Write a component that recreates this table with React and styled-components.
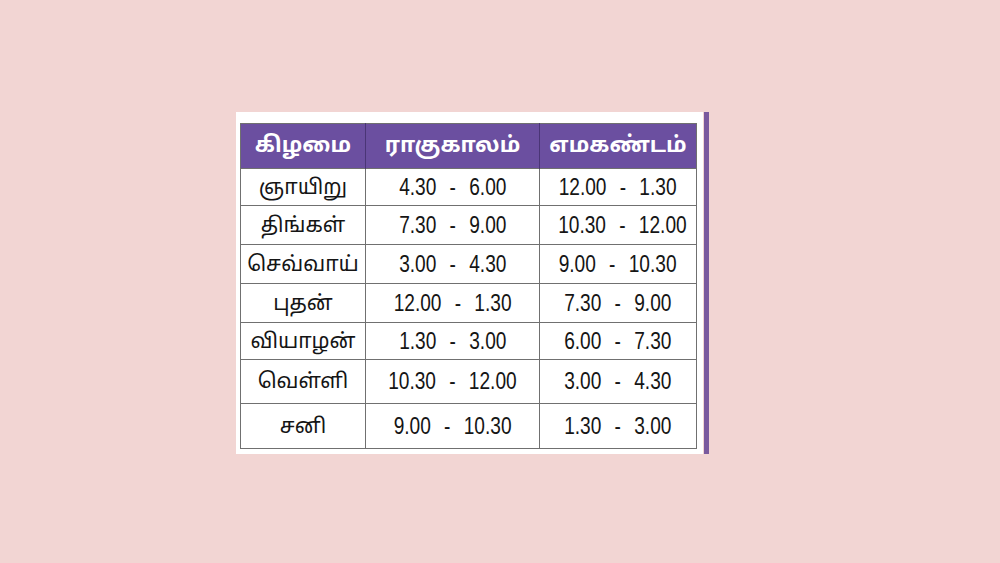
import styled, { createGlobalStyle } from "styled-components";

const GlobalStyle = createGlobalStyle`
  html, body {
    margin: 0;
    padding: 0;
    background: #f2d5d3;
  }
  body {
    font-family: "Liberation Sans", "Noto Sans", sans-serif;
  }
`;

const SPage = styled.div`
  width: 1000px;
  height: 563px;
  display: flex;
  padding: 112px 0 0 236px;
  box-sizing: border-box;
`;

const SCard = styled.div`
  display: flex;
  height: 342px;
`;

const SSheet = styled.div`
  width: 467px;
  background: #fff;
  padding: 11px 7px 6px 4px;
  box-sizing: border-box;
`;

const SBar = styled.div`
  width: 5px;
  margin-left: 1px;
  background: #7a5a9e;
`;

const STable = styled.table`
  width: 456px;
  border-collapse: collapse;
  table-layout: fixed;
  border: 1.5px solid #707070;
`;

const tamil = `"Noto Sans Tamil", "Lohit Tamil", "Noto Sans", sans-serif`;

const SHeadCell = styled.th`
  background: #6b4fa0;
  color: #fff;
  font-family: ${tamil};
  font-size: 22px;
  font-weight: 700;
  height: 44px;
  padding: 0;
  border-left: 1.5px solid #4a3576;
  text-align: center;
  &:first-child {
    border-left: none;
  }
`;

const SCell = styled.td`
  height: ${(p) => p.$h}px;
  padding: ${(p) => (p.$tamil ? "3px 0 0" : "1px 0 0")};
  text-align: center;
  border: 1.5px solid #707070;
  color: #151515;
  font-family: ${tamil};
  font-size: 21px;
  white-space: nowrap;
  box-sizing: border-box;
`;

const STime = styled.span`
  display: inline-block;
  font-family: "Liberation Sans", Arial, sans-serif;
  font-size: 24.5px;
  transform: scaleX(0.78);
  white-space: pre;
`;

const SDash = styled.span`
  margin: 0 17px;
`;

const Time = ({ value }) => {
  const [a, b] = value.split("-");
  return (
    <STime>
      {a}
      <SDash>-</SDash>
      {b}
    </STime>
  );
};

const rows = [
  ["ஞாயிறு", "4.30-6.00", "12.00-1.30", 37],
  ["திங்கள்", "7.30-9.00", "10.30-12.00", 39],
  ["செவ்வாய்", "3.00-4.30", "9.00-10.30", 39],
  ["புதன்", "12.00-1.30", "7.30-9.00", 39],
  ["வியாழன்", "1.30-3.00", "6.00-7.30", 37],
  ["வெள்ளி", "10.30-12.00", "3.00-4.30", 44],
  ["சனி", "9.00-10.30", "1.30-3.00", 45],
];

const App = () => (
  <>
    <GlobalStyle />
    <SPage>
      <SCard>
        <SSheet>
          <STable>
            <colgroup>
              <col style={{ width: 125 }} />
              <col style={{ width: 174 }} />
              <col style={{ width: 157 }} />
            </colgroup>
            <thead>
              <tr>
                <SHeadCell>கிழமை</SHeadCell>
                <SHeadCell>ராகுகாலம்</SHeadCell>
                <SHeadCell>எமகண்டம்</SHeadCell>
              </tr>
            </thead>
            <tbody>
              {rows.map(([day, rahu, ema, h]) => (
                <tr key={day}>
                  <SCell $tamil $h={h}>
                    {day}
                  </SCell>
                  <SCell $h={h}>
                    <Time value={rahu} />
                  </SCell>
                  <SCell $h={h}>
                    <Time value={ema} />
                  </SCell>
                </tr>
              ))}
            </tbody>
          </STable>
        </SSheet>
        <SBar />
      </SCard>
    </SPage>
  </>
);

export default App;
